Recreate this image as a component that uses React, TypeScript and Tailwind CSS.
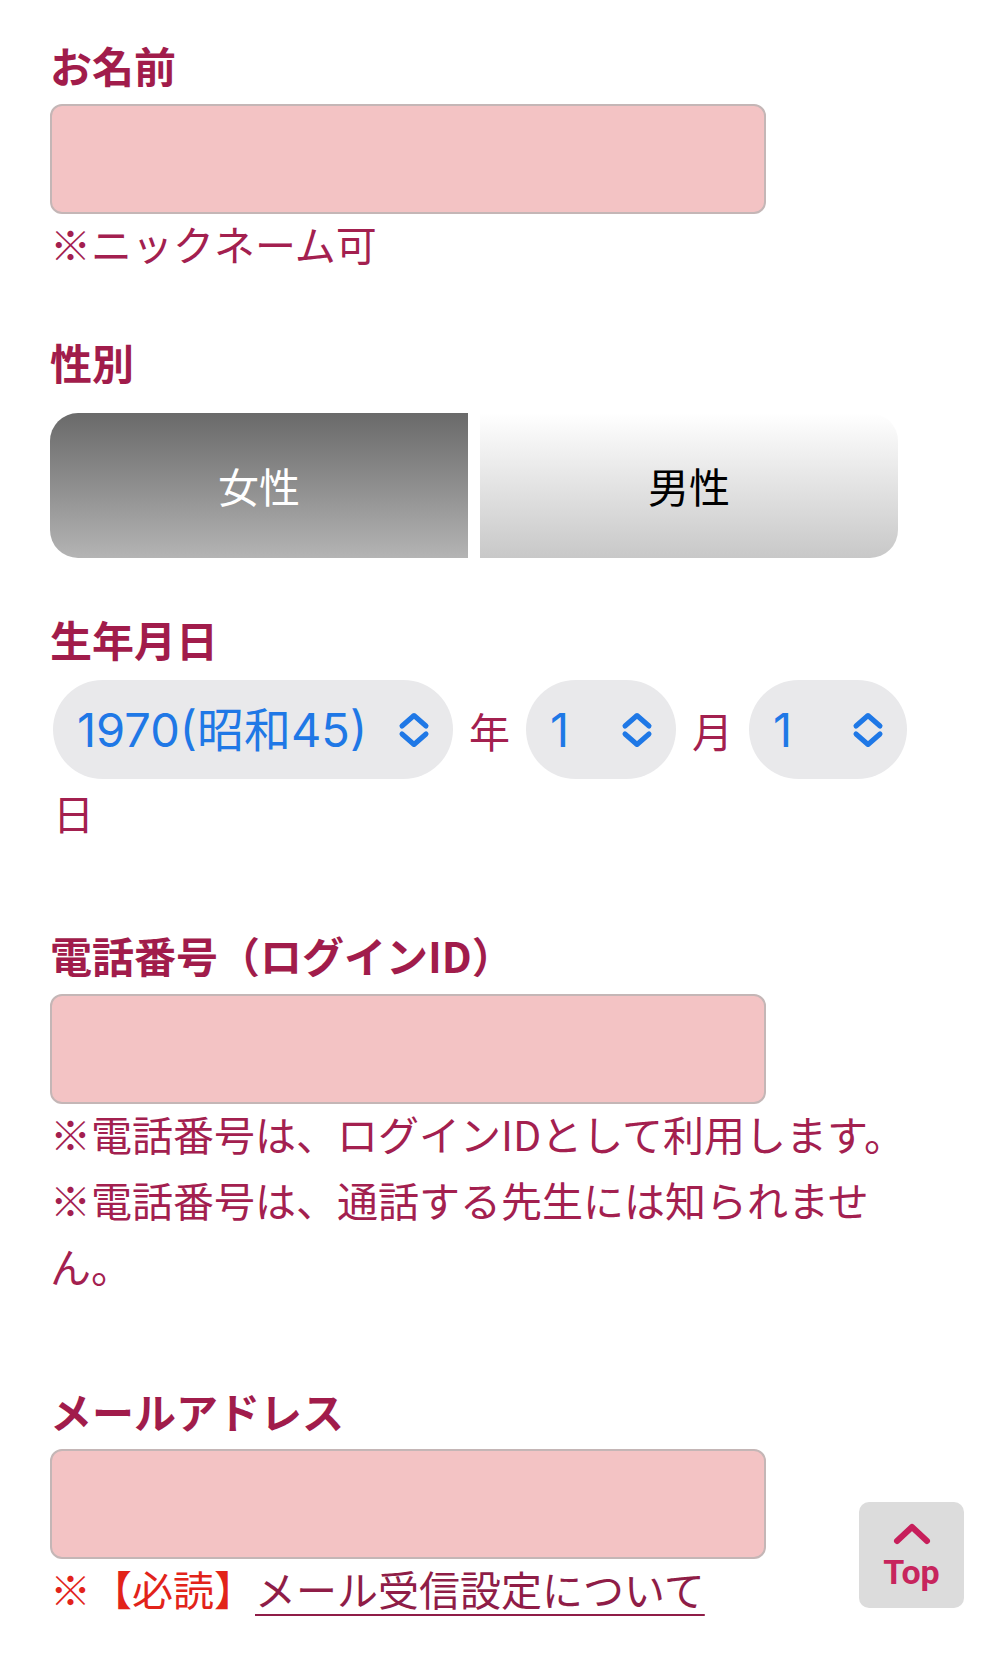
import React from "react";

const labelCls = "text-[42px] font-bold leading-[56px] text-[#a11c4b]";
const hintCls = "text-[41px] leading-[66px] text-[#a3204f]";
const inputCls =
  "block h-[110px] w-[716px] rounded-[12px] border-2 border-[#c4b6b6] bg-[#f3c3c4] outline-none";

function UpDown() {
  return (
    <svg width="32" height="36" viewBox="0 0 32 36" fill="none" aria-hidden="true">
      <path d="M4 14 L16 3.5 L28 14" stroke="#1f78e6" strokeWidth="5" strokeLinecap="round" strokeLinejoin="round" />
      <path d="M4 22 L16 32.5 L28 22" stroke="#1f78e6" strokeWidth="5" strokeLinecap="round" strokeLinejoin="round" />
    </svg>
  );
}

function Select({ value, width }: { value: string; width: string }) {
  return (
    <div
      className={
        "flex h-[99px] items-center justify-between rounded-full bg-[#e9e9eb] pl-[24px] pr-[23px] " + width
      }
    >
      <span className="font-['Inter','Noto_Sans_CJK_JP',sans-serif] text-[47px] leading-none text-[#1f78e6]">
        {value}
      </span>
      <UpDown />
    </div>
  );
}

export default function App() {
  return (
    <div className="relative min-h-[1654px] bg-white px-[50px] pt-[37px] font-['Noto_Sans_CJK_JP',sans-serif]">
      {/* お名前 */}
      <div className={labelCls}>お名前</div>
      <input type="text" className={"mt-[11px] " + inputCls} />
      <p className={"-mt-[4px] " + hintCls}>※ニックネーム可</p>

      {/* 性別 */}
      <div className={"mt-[58px] " + labelCls}>性別</div>
      <div className="mt-[23px] flex gap-[12px]">
        <button
          type="button"
          className="flex h-[145px] w-[418px] items-center justify-center rounded-l-[28px] bg-gradient-to-b from-[#6a6a6a] to-[#b4b4b4] text-[41px] text-white"
        >
          女性
        </button>
        <button
          type="button"
          className="flex h-[145px] w-[418px] items-center justify-center rounded-r-[28px] bg-gradient-to-b from-white to-[#c8c8c8] text-[41px] text-black"
        >
          男性
        </button>
      </div>

      {/* 生年月日 */}
      <div className={"mt-[53px] " + labelCls}>生年月日</div>
      <div className="mt-[13px] ml-[3px] flex w-[887px] flex-wrap items-center gap-x-[16px] gap-y-[5px] text-[41px] leading-[64px] text-[#a3204f]">
        <Select value="1970(昭和45)" width="w-[400px]" />
        <span>年</span>
        <Select value="1" width="w-[150px]" />
        <span>月</span>
        <Select value="1" width="w-[158px]" />
        <span className="-mt-[4px]">日</span>
      </div>

      {/* 電話番号 */}
      <div className={"mt-[83px] " + labelCls}>電話番号（ログインID）</div>
      <input type="tel" className={"mt-[11px] " + inputCls} />
      <p className={"-mt-[4px] " + hintCls}>※電話番号は、ログインIDとして利用します。</p>
      <p className={hintCls}>
        ※電話番号は、通話する先生には知られませ
        <br />
        ん。
      </p>

      {/* メールアドレス */}
      <div className={"mt-[85px] " + labelCls}>メールアドレス</div>
      <input type="email" className={"mt-[10px] " + inputCls} />
      <p className="-mt-[4px] text-[41px] leading-[66px]">
        <span className="text-[#e2231a]">※【必読】</span>
        <a href="#" className="text-[#8f1d47] underline decoration-2 underline-offset-[8px]">
          メール受信設定について
        </a>
      </p>

      {/* Top button */}
      <a
        href="#"
        className="fixed bottom-[46px] right-[26px] flex h-[106px] w-[105px] flex-col items-center justify-center rounded-[10px] bg-[#dcdcdc]"
      >
        <svg width="42" height="24" viewBox="0 0 42 24" fill="none" aria-hidden="true">
          <path d="M6 20 L21 6 L36 20" stroke="#c71f5b" strokeWidth="6" strokeLinecap="round" strokeLinejoin="round" />
        </svg>
        <span className="mt-[10px] font-['Roboto',sans-serif] text-[34px] font-bold leading-[34px] text-[#c7255d]">
          Top
        </span>
      </a>
    </div>
  );
}
